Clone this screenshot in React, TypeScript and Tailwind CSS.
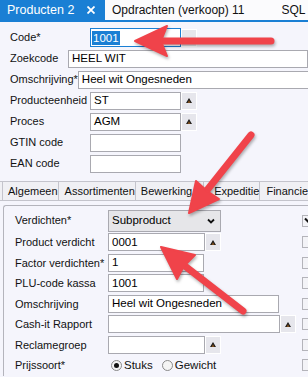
import React from "react";

const font = { fontFamily: '"Liberation Sans", Arial, sans-serif' };

function UpButton({ empty }: { empty?: boolean }) {
  return (
    <div className="w-[16px] h-[18px] bg-[#e6e6ec] border border-white flex items-center justify-center shrink-0">
      {!empty && (
        <svg width="6" height="5" viewBox="0 0 6 5">
          <polygon points="3,0 6,5 0,5" fill="#1b1b1b" />
          <polygon points="3,2 4.5,5 1.5,5" fill="#c07020" opacity="0.6" />
        </svg>
      )}
    </div>
  );
}

function Input({ w, value, button }: { w: string; value?: string; button?: boolean }) {
  return (
    <div className="flex items-center">
      <div className={`${w} h-[18px] bg-white border border-[#a9a9b0] flex items-center px-[3px] text-[11.5px] text-black whitespace-nowrap overflow-hidden`}>
        {value}
      </div>
      {button && <UpButton />}
    </div>
  );
}

function TopRow({ label, children }: { label: string; children: React.ReactNode }) {
  return (
    <div className="h-[21px] flex items-center">
      <div className="w-[90px] pl-[10px] text-[11px] text-[#111] whitespace-nowrap">{label}</div>
      {children}
    </div>
  );
}

function Check({ checked }: { checked?: boolean }) {
  return (
    <div className="w-[13px] h-[12px] bg-[#f3f3f7] border border-[#b4b4ba] shrink-0 flex items-center justify-center">
      {checked && (
        <svg width="9" height="7" viewBox="0 0 9 7">
          <path d="M1 1.5 L4.5 5 L8 1.5" stroke="#111" strokeWidth="2" fill="none" />
        </svg>
      )}
    </div>
  );
}

function PanelRow({
  label,
  children,
  tall,
  checked,
}: {
  label: string;
  children: React.ReactNode;
  tall?: boolean;
  checked?: boolean;
}) {
  return (
    <div className={`${tall ? "h-[23px]" : "h-[20.5px]"} flex items-center`}>
      <div className="w-[104px] pl-[11px] text-[11px] text-[#111] whitespace-nowrap">{label}</div>
      <div className="w-[194px] flex items-center">{children}</div>
      <Check checked={checked} />
    </div>
  );
}

function Radio({ on, label }: { on?: boolean; label: string }) {
  return (
    <div className="flex items-center gap-[2px]">
      <div className="w-[11px] h-[11px] rounded-full border border-[#8a8a8a] bg-[#f4f4f4] flex items-center justify-center">
        {on && <div className="w-[5px] h-[5px] rounded-full bg-[#111]" />}
      </div>
      <span className="text-[11.5px] text-[#111]">{label}</span>
    </div>
  );
}

function Arrows() {
  return (
    <svg
      className="absolute inset-0 pointer-events-none"
      width="308"
      height="377"
      viewBox="0 0 308 377"
      style={{ filter: "drop-shadow(1px 2px 1.5px rgba(0,0,0,0.3))" }}
    >
      <g fill="#f0434a" stroke="#f0434a" strokeLinecap="round" strokeLinejoin="round">
        <line x1="271" y1="41" x2="158" y2="41" strokeWidth="7" />
        <polygon points="135,41 167,26 161,41 167,56" strokeWidth="2" />
        <line x1="251" y1="135" x2="204" y2="194" strokeWidth="7" />
        <polygon points="189,213 196,181 207,191 219,199" strokeWidth="2" />
        <line x1="243" y1="311" x2="181" y2="263" strokeWidth="7" />
        <polygon points="161,247 195,255 184,266 177,279" strokeWidth="2" />
      </g>
    </svg>
  );
}

export default function App() {
  return (
    <div className="relative w-[308px] h-[377px] overflow-hidden bg-[#f5f5fc]" style={font}>
      {/* document tabs */}
      <div className="h-[22px] flex bg-[#fbfbfd] border-b-2 border-[#1a7fd4] whitespace-nowrap">
        <div className="w-[105px] bg-[#1a7fd4] flex items-center pl-[7px] text-white text-[12.5px]">
          Producten 2
          <svg className="ml-auto mr-[10px]" width="8" height="8" viewBox="0 0 8 8">
            <path d="M0.5 0.5 L7.5 7.5 M7.5 0.5 L0.5 7.5" stroke="#fff" strokeWidth="1.8" />
          </svg>
        </div>
        <div className="flex items-center pl-[7px] text-[12px] text-[#111]">Opdrachten (verkoop) 11</div>
        <div className="flex items-center pl-[37px] text-[12px] text-[#111]">SQL</div>
      </div>

      {/* header fields */}
      <div className="pt-[5px]">
        <TopRow label="Code*">
          <div className="w-[91px] h-[19px] bg-white border border-[#1a7fd4] flex items-center px-[1px]">
            <span className="bg-[#1a7fd4] text-white text-[11.5px] leading-[14px] px-[1px]">1001</span>
          </div>
          <UpButton empty />
        </TopRow>
        <TopRow label="Zoekcode">
          <Input w="w-[240px]" value="HEEL WIT" />
        </TopRow>
        <TopRow label="Omschrijving*">
          <Input w="w-[240px]" value="Heel wit Ongesneden" />
        </TopRow>
        <TopRow label="Producteenheid">
          <Input w="w-[91px]" value="ST" button />
        </TopRow>
        <TopRow label="Proces">
          <Input w="w-[91px]" value="AGM" button />
        </TopRow>
        <TopRow label="GTIN code">
          <Input w="w-[91px]" />
        </TopRow>
        <TopRow label="EAN code">
          <Input w="w-[91px]" />
        </TopRow>
      </div>

      {/* section tabs */}
      <div className="mt-[7px] h-[20px] flex pl-[2px] border-t border-b border-[#c4c4cc] bg-[#f0f0f4] text-[11px] text-[#111] whitespace-nowrap">
        <div className="w-[57px] border-l border-r border-[#c4c4cc] flex items-center pl-[5px]">Algemeen</div>
        <div className="w-[78px] border-r border-[#c4c4cc] flex items-center pl-[6px]">Assortimenten</div>
        <div className="w-[72px] border-r border-[#c4c4cc] flex items-center pl-[5px]">Bewerking</div>
        <div className="w-[58px] border-r border-[#c4c4cc] flex items-center pl-[10px]">Expeditie</div>
        <div className="flex items-center pl-[6px]">Financie</div>
      </div>

      {/* detail panel */}
      <div className="mt-[4px] ml-[3px] w-[330px] border-t border-l border-[#b4b4bc] rounded-tl-[3px] pt-[3px]">
        <PanelRow label="Verdichten*" tall checked>
          <div className="w-[113px] h-[22px] bg-[#e6e6e9] border border-[#a9a9b0] flex items-center pl-[3px] pr-[5px] text-[11.5px] text-black">
            Subproduct
            <svg className="ml-auto" width="8" height="6" viewBox="0 0 8 6">
              <path d="M1 1.5 L4 4.5 L7 1.5" stroke="#111" strokeWidth="1.8" fill="none" />
            </svg>
          </div>
        </PanelRow>
        <PanelRow label="Product verdicht">
          <Input w="w-[97px]" value="0001" button />
        </PanelRow>
        <PanelRow label="Factor verdichten*">
          <Input w="w-[96px]" value="1" />
        </PanelRow>
        <PanelRow label="PLU-code kassa">
          <Input w="w-[96px]" value="1001" />
        </PanelRow>
        <PanelRow label="Omschrijving">
          <Input w="w-[171px]" value="Heel wit Ongesneden" />
        </PanelRow>
        <PanelRow label="Cash-it Rapport">
          <Input w="w-[172px]" button />
        </PanelRow>
        <PanelRow label="Reclamegroep">
          <Input w="w-[97px]" button />
        </PanelRow>
        <PanelRow label="Prijssoort*">
          <div className="flex items-center gap-[9px] pl-[3px]">
            <Radio on label="Stuks" />
            <Radio label="Gewicht" />
          </div>
        </PanelRow>
      </div>

      <Arrows />
    </div>
  );
}
